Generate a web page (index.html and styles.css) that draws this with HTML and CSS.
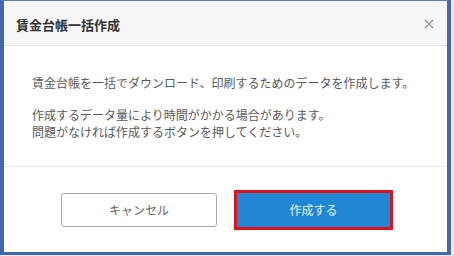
FILE: index.html
```html
<!DOCTYPE html>
<html lang="ja">
<head>
<meta charset="utf-8">
<link rel="stylesheet" href="styles.css">
</head>
<body>
<div class="frame">
  <div class="dialog">
    <div class="dialog-header">
      <h1 class="dialog-title">賃金台帳一括作成</h1>
      <button class="close" aria-label="閉じる">
        <svg width="10" height="10" viewBox="0 0 10 10"><path d="M1 1L9 9M9 1L1 9" stroke="#9a9a9a" stroke-width="1.4" fill="none"/></svg>
      </button>
    </div>
    <div class="dialog-body">
      <p>賃金台帳を一括でダウンロード、印刷するためのデータを作成します。</p>
      <p>作成するデータ量により時間がかかる場合があります。<br>問題がなければ作成するボタンを押してください。</p>
    </div>
    <div class="dialog-footer">
      <button class="btn btn-cancel">キャンセル</button>
      <button class="btn btn-primary">作成する</button>
    </div>
  </div>
</div>
</body>
</html>
```
FILE: styles.css
```css
* { box-sizing: border-box; }
html, body { margin: 0; padding: 0; }
body {
  width: 454px;
  height: 256px;
  overflow: hidden;
  background: #e8edf5;
  font-family: "Noto Sans CJK JP", "Noto Sans", sans-serif;
}
.frame {
  width: 454px;
  height: 256px;
  padding-right: 3px;
}
.dialog {
  width: 451px;
  height: 255px;
  border-top: 1px solid #5b7fc0;
  border-left: 4px solid #4467ad;
  border-right: 4px solid #4467ad;
  border-bottom: 3px solid #4467ad;
  background: #fff;
  display: flex;
  flex-direction: column;
}
.dialog-header {
  height: 45px;
  background: #f6f6f7;
  border-bottom: 1px solid #e4e4e6;
  display: flex;
  align-items: center;
  justify-content: space-between;
  padding: 0 13px 0 12px;
}
.dialog-title {
  margin: 0;
  font-size: 13px;
  font-weight: 700;
  color: #333;
  padding-top: 2px;
}
.close {
  border: 0;
  background: none;
  padding: 0;
  width: 10px;
  height: 10px;
  display: flex;
  margin-top: 2px;
}
.dialog-body {
  padding: 28px 20px 25px 28px;
  border-bottom: 1px solid #e8e8ea;
  color: #5a5a5a;
  font-size: 12px;
  line-height: 17.5px;
}
.dialog-body p { margin: 0; }
.dialog-body p + p { margin-top: 14px; }
.dialog-footer {
  flex: 1;
  display: flex;
  justify-content: center;
  align-items: flex-start;
  gap: 20px;
  padding-top: 26px;
}
.btn {
  height: 34px;
  font-family: inherit;
  font-size: 12px;
  border-radius: 3px;
  cursor: pointer;
}
.btn-cancel {
  width: 156px;
  background: #fff;
  border: 1px solid #a9a9a9;
  color: #666;
}
.btn-primary {
  width: 153px;
  background: #1f87d3;
  border: 0;
  border-radius: 0;
  color: #e8f2fb;
  outline: 3px solid #e0101c;
  outline-offset: 0;
}
```
